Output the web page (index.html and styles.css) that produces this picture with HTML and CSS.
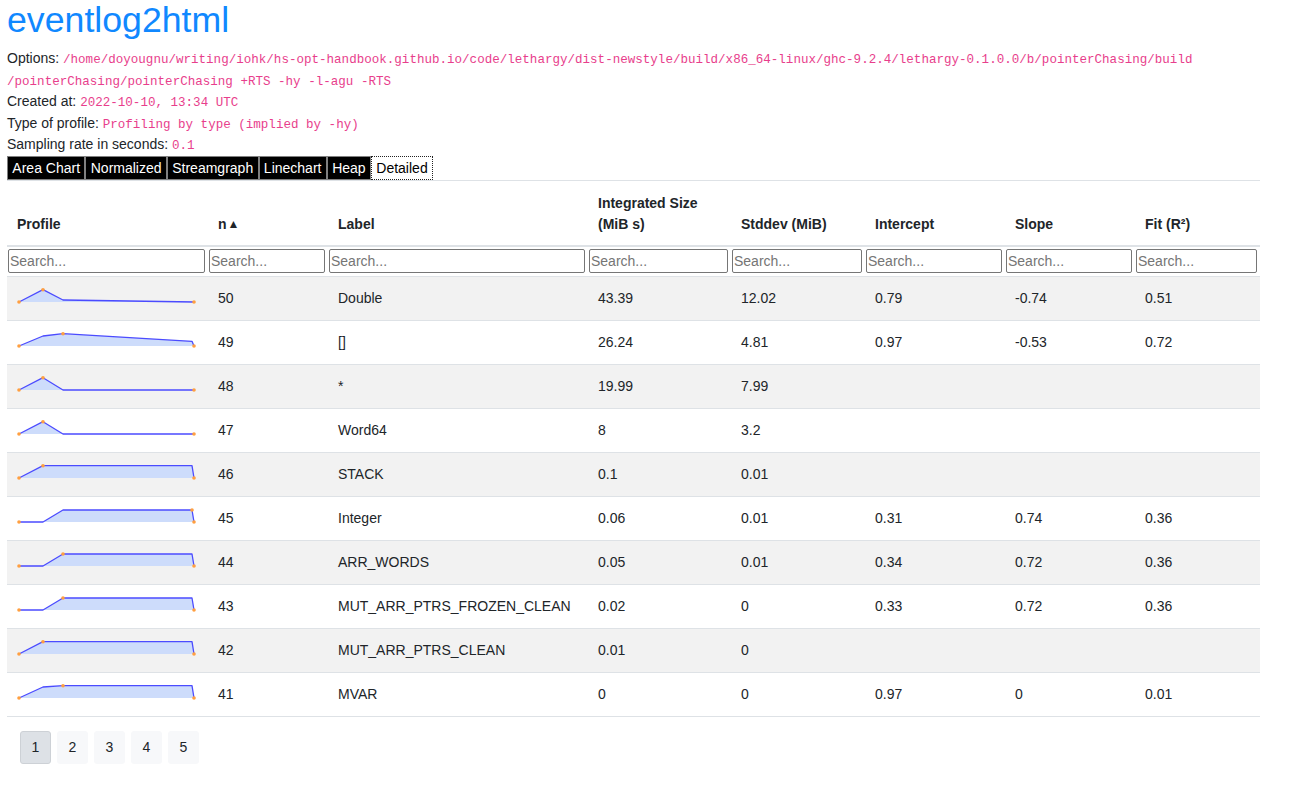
FILE: index.html
```html
<!DOCTYPE html>
<html>
<head>
<meta charset="utf-8">
<title>eventlog2html</title>
<link rel="stylesheet" href="styles.css">
</head>
<body>
<div class="page">
  <h1 class="title">eventlog2html</h1>
  <div class="info">
    <div>Options: <code>/home/doyougnu/writing/iohk/hs-opt-handbook.github.io/code/lethargy/dist-newstyle/build/x86_64-linux/ghc-9.2.4/lethargy-0.1.0.0/b/pointerChasing/build<br>/pointerChasing/pointerChasing +RTS -hy -l-agu -RTS</code></div>
    <div>Created at: <code>2022-10-10, 13:34 UTC</code></div>
    <div>Type of profile: <code>Profiling by type (implied by -hy)</code></div>
    <div>Sampling rate in seconds: <code>0.1</code></div>
  </div>
  <div class="tabs">
    <button class="tab">Area Chart</button>
    <button class="tab">Normalized</button>
    <button class="tab">Streamgraph</button>
    <button class="tab">Linechart</button>
    <button class="tab">Heap</button>
    <button class="tab active">Detailed</button>
  </div>
  <div class="table-wrap">
    <table class="grid">
      <colgroup>
        <col class="c-profile"><col class="c-n"><col class="c-label"><col class="c-int"><col class="c-std"><col class="c-icpt"><col class="c-slope"><col class="c-fit">
      </colgroup>
      <thead>
        <tr class="head">
          <th>Profile</th>
          <th>n<span class="sort">&#9650;</span></th>
          <th>Label</th>
          <th>Integrated Size (MiB s)</th>
          <th>Stddev (MiB)</th>
          <th>Intercept</th>
          <th>Slope</th>
          <th>Fit (R²)</th>
        </tr>
        <tr class="search">
          <td><input placeholder="Search..."></td>
          <td><input placeholder="Search..."></td>
          <td><input placeholder="Search..."></td>
          <td><input placeholder="Search..."></td>
          <td><input placeholder="Search..."></td>
          <td><input placeholder="Search..."></td>
          <td><input placeholder="Search..."></td>
          <td><input placeholder="Search..."></td>
        </tr>
      </thead>
      <tbody>
        <tr>
          <td><svg class="spark" viewBox="0 0 180 14"><polygon class="area" points="2,13 26,0.7 46,11 177,13"/><polyline class="line" points="2,13 26,0.7 46,11 177,13"/><circle class="dot" cx="2" cy="13" r="1.8"/><circle class="dot" cx="26" cy="0.7" r="1.8"/><circle class="dot" cx="177" cy="13" r="1.8"/></svg></td>
          <td>50</td><td>Double</td><td>43.39</td><td>12.02</td><td>0.79</td><td>-0.74</td><td>0.51</td>
        </tr>
        <tr>
          <td><svg class="spark" viewBox="0 0 180 14"><polygon class="area" points="2,13 26,3 46,0.7 175,8.3 177,13"/><polyline class="line" points="2,13 26,3 46,0.7 175,8.3 177,13"/><circle class="dot" cx="2" cy="13" r="1.8"/><circle class="dot" cx="46" cy="0.7" r="1.8"/><circle class="dot" cx="177" cy="13" r="1.8"/></svg></td>
          <td>49</td><td>[]</td><td>26.24</td><td>4.81</td><td>0.97</td><td>-0.53</td><td>0.72</td>
        </tr>
        <tr>
          <td><svg class="spark" viewBox="0 0 180 14"><polygon class="area" points="2,13 26,0.7 46,13 177,13"/><polyline class="line" points="2,13 26,0.7 46,13 177,13"/><circle class="dot" cx="2" cy="13" r="1.8"/><circle class="dot" cx="26" cy="0.7" r="1.8"/><circle class="dot" cx="177" cy="13" r="1.8"/></svg></td>
          <td>48</td><td>*</td><td>19.99</td><td>7.99</td><td></td><td></td><td></td>
        </tr>
        <tr>
          <td><svg class="spark" viewBox="0 0 180 14"><polygon class="area" points="2,13 26,0.7 46,13 177,13"/><polyline class="line" points="2,13 26,0.7 46,13 177,13"/><circle class="dot" cx="2" cy="13" r="1.8"/><circle class="dot" cx="26" cy="0.7" r="1.8"/><circle class="dot" cx="177" cy="13" r="1.8"/></svg></td>
          <td>47</td><td>Word64</td><td>8</td><td>3.2</td><td></td><td></td><td></td>
        </tr>
        <tr>
          <td><svg class="spark" viewBox="0 0 180 14"><polygon class="area" points="2,13 26,0.7 175,0.7 177,13"/><polyline class="line" points="2,13 26,0.7 175,0.7 177,13"/><circle class="dot" cx="2" cy="13" r="1.8"/><circle class="dot" cx="26" cy="0.7" r="1.8"/><circle class="dot" cx="177" cy="13" r="1.8"/></svg></td>
          <td>46</td><td>STACK</td><td>0.1</td><td>0.01</td><td></td><td></td><td></td>
        </tr>
        <tr>
          <td><svg class="spark" viewBox="0 0 180 14"><polygon class="area" points="2,13 26,13 46,1 175,1 177,13"/><polyline class="line" points="2,13 26,13 46,1 175,1 177,13"/><circle class="dot" cx="2" cy="13" r="1.8"/><circle class="dot" cx="175" cy="1" r="1.8"/><circle class="dot" cx="177" cy="13" r="1.8"/></svg></td>
          <td>45</td><td>Integer</td><td>0.06</td><td>0.01</td><td>0.31</td><td>0.74</td><td>0.36</td>
        </tr>
        <tr>
          <td><svg class="spark" viewBox="0 0 180 14"><polygon class="area" points="2,13 26,13 46,1 175,1 177,13"/><polyline class="line" points="2,13 26,13 46,1 175,1 177,13"/><circle class="dot" cx="2" cy="13" r="1.8"/><circle class="dot" cx="46" cy="1" r="1.8"/><circle class="dot" cx="177" cy="13" r="1.8"/></svg></td>
          <td>44</td><td>ARR_WORDS</td><td>0.05</td><td>0.01</td><td>0.34</td><td>0.72</td><td>0.36</td>
        </tr>
        <tr>
          <td><svg class="spark" viewBox="0 0 180 14"><polygon class="area" points="2,13 26,13 46,1 175,1 177,13"/><polyline class="line" points="2,13 26,13 46,1 175,1 177,13"/><circle class="dot" cx="2" cy="13" r="1.8"/><circle class="dot" cx="46" cy="1" r="1.8"/><circle class="dot" cx="177" cy="13" r="1.8"/></svg></td>
          <td>43</td><td>MUT_ARR_PTRS_FROZEN_CLEAN</td><td>0.02</td><td>0</td><td>0.33</td><td>0.72</td><td>0.36</td>
        </tr>
        <tr>
          <td><svg class="spark" viewBox="0 0 180 14"><polygon class="area" points="2,13 26,0.7 175,0.7 177,13"/><polyline class="line" points="2,13 26,0.7 175,0.7 177,13"/><circle class="dot" cx="2" cy="13" r="1.8"/><circle class="dot" cx="26" cy="0.7" r="1.8"/><circle class="dot" cx="177" cy="13" r="1.8"/></svg></td>
          <td>42</td><td>MUT_ARR_PTRS_CLEAN</td><td>0.01</td><td>0</td><td></td><td></td><td></td>
        </tr>
        <tr>
          <td><svg class="spark" viewBox="0 0 180 14"><polygon class="area" points="2,13 26,2 46,0.7 175,0.7 177,13"/><polyline class="line" points="2,13 26,2 46,0.7 175,0.7 177,13"/><circle class="dot" cx="2" cy="13" r="1.8"/><circle class="dot" cx="46" cy="0.7" r="1.8"/><circle class="dot" cx="177" cy="13" r="1.8"/></svg></td>
          <td>41</td><td>MVAR</td><td>0</td><td>0</td><td>0.97</td><td>0</td><td>0.01</td>
        </tr>
      </tbody>
    </table>
  </div>
  <div class="pager">
    <button class="pg current">1</button>
    <button class="pg">2</button>
    <button class="pg">3</button>
    <button class="pg">4</button>
    <button class="pg">5</button>
  </div>
</div>
</body>
</html>
```
FILE: styles.css
```css
html, body {
  margin: 0;
  padding: 0;
  background: #ffffff;
}
body {
  font-family: "Liberation Sans", Arial, sans-serif;
  font-size: 14px;
  line-height: 21px;
  color: #212529;
}
.page {
  width: 1253px;
  margin-left: 7px;
}
.title {
  margin: 0 0 8px 0;
  font-size: 35.7px;
  line-height: 40px;
  font-weight: 400;
  color: #1088ff;
}
.info {
  line-height: 21.5px;
}
.info code {
  font-family: "Liberation Mono", "Courier New", monospace;
  font-size: 12.55px;
  line-height: 1;
  color: #e83e8c;
}
.tabs {
  display: flex;
  margin-top: 0;
  border-bottom: 1px solid #dee2e6;
}
.tab {
  font-family: "Liberation Sans", Arial, sans-serif;
  font-size: 14px;
  line-height: 20px;
  padding: 1px 4.35px;
  margin: 0;
  background: #000000;
  color: #ffffff;
  border: 1px solid #808080;
  border-radius: 0;
}
.tab.active {
  background: #ffffff;
  color: #000000;
  border: 1px dotted #222222;
}
.table-wrap {
  margin-top: 1px;
}
.grid {
  width: 1253px;
  table-layout: fixed;
  border-collapse: collapse;
  border-spacing: 0;
}
.c-profile { width: 201px; }
.c-n { width: 120px; }
.c-label { width: 260px; }
.c-int { width: 143px; }
.c-std { width: 134px; }
.c-icpt { width: 140px; }
.c-slope { width: 130px; }
.c-fit { width: 125px; }
.head th {
  text-align: left;
  font-weight: 700;
  vertical-align: bottom;
  padding: 11px 10px 10px 10px;
  border-bottom: 2px solid #dee2e6;
}
.sort {
  font-size: 12px;
  margin-left: 1px;
  vertical-align: 1px;
}
.search td {
  padding: 2px 3px 3px 1px;
}
.search input {
  display: block;
  box-sizing: border-box;
  width: 100%;
  height: 24px;
  margin: 0;
  padding: 1px 1px;
  font-family: "Liberation Sans", Arial, sans-serif;
  font-size: 14px;
  color: #212529;
  border: 1px solid #767676;
  border-radius: 2px;
  background: #ffffff;
}
.search input::placeholder {
  color: #757575;
}
tbody td {
  padding: 11px 10px;
  line-height: 21px;
  border-top: 1px solid #dee2e6;
  vertical-align: middle;
  white-space: nowrap;
}
tbody tr:last-child td {
  border-bottom: 1px solid #dee2e6;
}
tbody tr:nth-child(odd) {
  background: #f2f2f2;
}
.spark {
  display: block;
  width: 180px;
  height: 14px;
  overflow: visible;
  margin-bottom: 5px;
}
.spark .area {
  fill: #cddcfb;
  stroke: none;
}
.spark .line {
  fill: none;
  stroke: #4b4bff;
  stroke-width: 1.3;
  stroke-linejoin: round;
}
.spark .dot {
  fill: #ff9f40;
}
.pager {
  display: flex;
  gap: 6px;
  margin: 14px 0 0 13px;
}
.pg {
  box-sizing: border-box;
  width: 31px;
  height: 33px;
  margin: 0;
  padding: 0;
  font-family: "Liberation Sans", Arial, sans-serif;
  font-size: 14px;
  color: #212529;
  background: #f7f8fa;
  border: 1px solid #f7f8fa;
  border-radius: 3px;
}
.pg.current {
  background: #dde1e6;
  border-color: #cdd1d6;
}
```
